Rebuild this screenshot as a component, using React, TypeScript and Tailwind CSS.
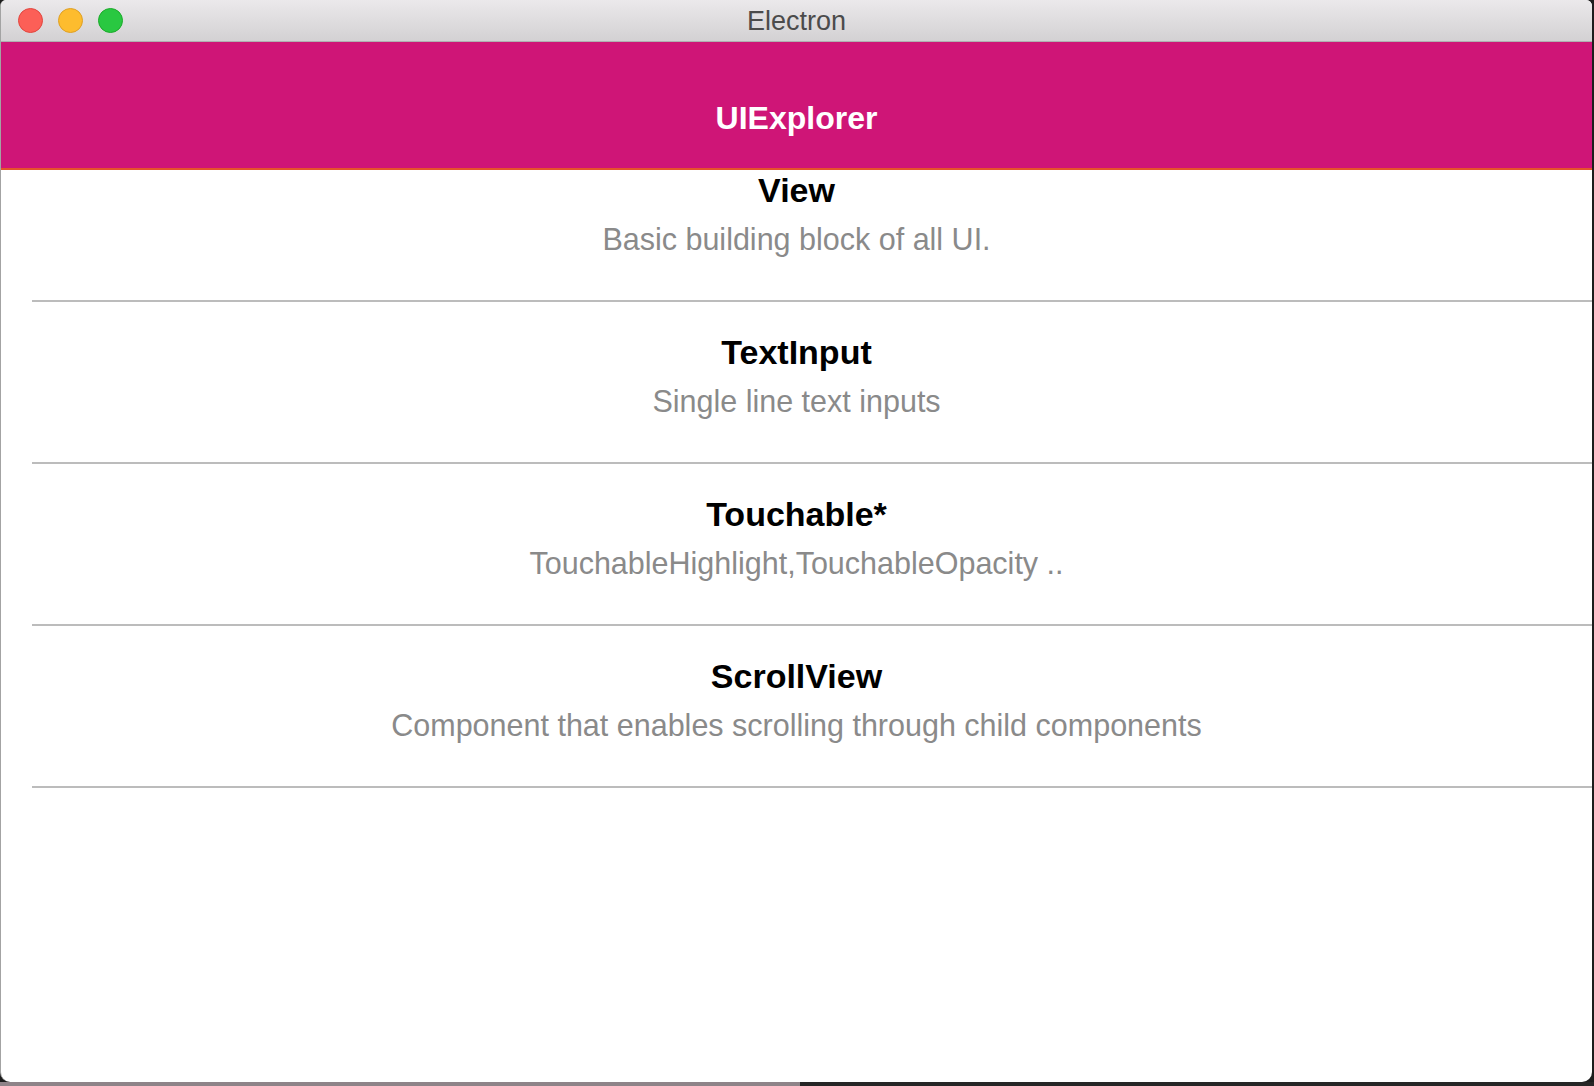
import React from "react";

const rows = [
  { title: "View", desc: "Basic building block of all UI." },
  { title: "TextInput", desc: "Single line text inputs" },
  { title: "Touchable*", desc: "TouchableHighlight,TouchableOpacity .." },
  { title: "ScrollView", desc: "Component that enables scrolling through child components" },
];

export default function App() {
  return (
    <div
      className="w-[1594px] h-[1086px] bg-[#1d1d1d] overflow-hidden flex flex-col"
      style={{ fontFamily: '"Liberation Sans", Arial, sans-serif' }}
    >
      <div className="w-[1592px] h-[1082px] rounded-t-[6px] rounded-b-[10px] overflow-hidden bg-white border-l border-[#a3a3a3] flex flex-col">
        {/* Title bar */}
        <div className="relative h-[42px] shrink-0 bg-gradient-to-b from-[#ebe9eb] to-[#d3d1d3] border-b border-[#b0b0b0] flex items-center">
          <div className="flex items-center gap-[15px] pl-[17px]">
            <div className="w-[25px] h-[25px] rounded-full bg-[#fc5f57] border border-[#e2463f]" />
            <div className="w-[25px] h-[25px] rounded-full bg-[#fdbc2e] border border-[#dfa024]" />
            <div className="w-[25px] h-[25px] rounded-full bg-[#29c841] border border-[#1aab29]" />
          </div>
          <div className="absolute inset-0 flex items-center justify-center pt-[2px] text-[27px] text-[#4b4b4b] leading-none">
            Electron
          </div>
        </div>
        {/* Nav header */}
        <div className="relative z-10 h-[128px] shrink-0 bg-[#cf1577] border-b-2 border-[#e5532b] flex justify-center pt-[56px]">
          <div className="text-[32px] font-bold text-white leading-[40px] h-[40px]">UIExplorer</div>
        </div>
        {/* List */}
        <div className="flex-1 overflow-hidden">
          <div className="-mt-[30px] flex flex-col">
            {rows.map((r) => (
              <div key={r.title} className="h-[162px] flex flex-col">
                <div className="flex-1 flex flex-col items-center pt-[30px]">
                  <div className="text-[34px] font-bold text-black leading-[40px]">{r.title}</div>
                  <div className="mt-[11px] text-[30.5px] text-[#8a8a8a] leading-[36px]">{r.desc}</div>
                </div>
                <div className="ml-[31px] h-[2px] bg-[#bcbcbc]" />
              </div>
            ))}
          </div>
        </div>
      </div>
      <div className="flex h-[4px]">
        <div className="w-[800px] bg-[#8e8388]" />
        <div className="flex-1 bg-[#262626]" />
      </div>
    </div>
  );
}
